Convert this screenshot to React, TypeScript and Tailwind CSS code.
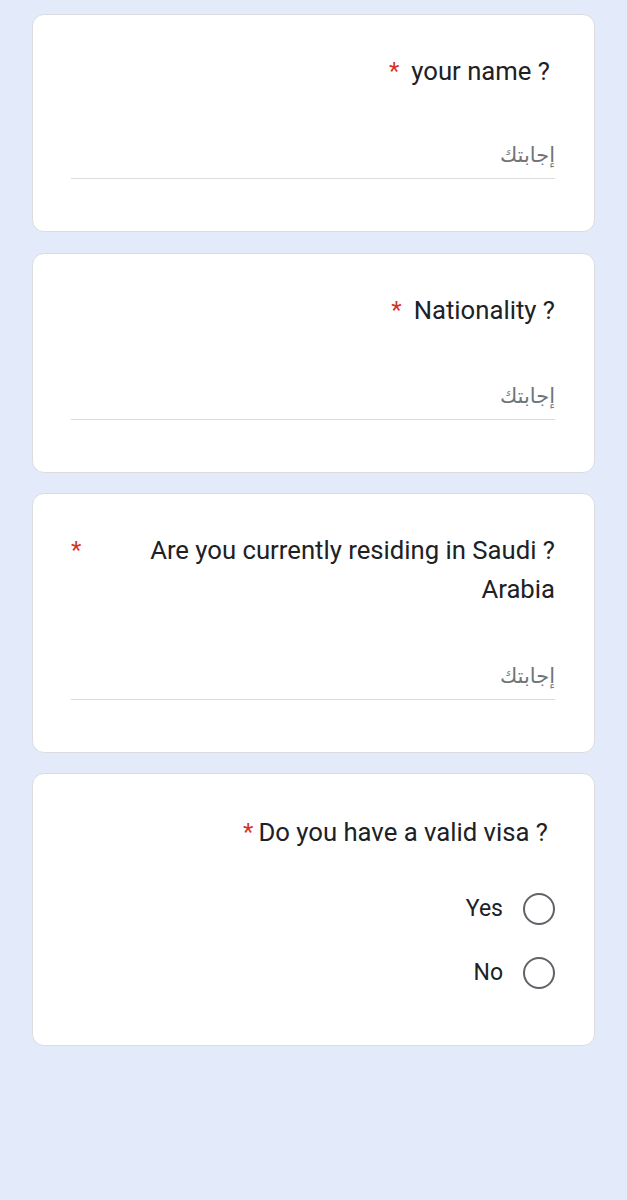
const font = { fontFamily: 'Roboto, "DejaVu Sans", "Liberation Sans", sans-serif' };

const Star = ({ className = "" }: { className?: string }) => (
    <span className={`text-[#d93025] text-[24px] leading-[39px] ${className}`}>*</span>
);

const AnswerInput = ({ mt }: { mt: string }) => (
    <div className={`${mt} h-[41px] border-b border-[#dadce0] flex justify-end items-start pt-[3px]`}>
        <span dir="rtl" className="text-[21px] leading-[28px] text-[#70757a]">إجابتك</span>
    </div>
);

const Card: React.FC<{ children: React.ReactNode; className?: string }> = ({ children, className = "" }) => (
    <div className={`bg-white border border-[#dadce0] rounded-[12px] pl-[38px] pr-[39px] pt-[37px] ${className}`}>
        {children}
    </div>
);

const Radio = ({ label }: { label: string }) => (
    <div className="h-[48px] flex items-center justify-end gap-[20px]">
        <span className="text-[23px] text-[#202124]">{label}</span>
        <span className="w-[32px] h-[32px] rounded-full border-[2.5px] border-[#5f6368]" />
    </div>
);

export default function App() {
    return (
        <div className="min-h-[1200px] bg-[#e3eafa] px-[32px] pt-[14px] pb-[40px] text-[#202124]" style={font}>
            <div className="flex flex-col gap-[20px]">
                <Card>
                    <div className="flex justify-end items-start pr-[5px]">
                        <Star className="mr-[12px]" />
                        <span className="text-[25.7px] leading-[39px]">your name ?</span>
                    </div>
                    <AnswerInput mt="mt-[47px]" />
                    <div className="h-[52px]" />
                </Card>

                <Card className="mt-[1px]">
                    <div className="flex justify-end items-start">
                        <Star className="mr-[12px]" />
                        <span className="text-[25.7px] leading-[39px]">Nationality ?</span>
                    </div>
                    <AnswerInput mt="mt-[49px]" />
                    <div className="h-[52px]" />
                </Card>

                <Card>
                    <div className="flex justify-between items-start">
                        <Star />
                        <div className="text-right text-[25.7px] leading-[39px]">
                            <div>Are you currently residing in Saudi ?</div>
                            <div>Arabia</div>
                        </div>
                    </div>
                    <AnswerInput mt="mt-[50px]" />
                    <div className="h-[52px]" />
                </Card>

                <Card className="pt-[39px]">
                    <div className="flex justify-end items-start pr-[7px]">
                        <Star className="mr-[5px]" />
                        <span className="text-[25.7px] leading-[39px]">Do you have a valid visa ?</span>
                    </div>
                    <div className="mt-[33px] flex flex-col gap-[16px]">
                        <Radio label="Yes" />
                        <Radio label="No" />
                    </div>
                    <div className="h-[48px]" />
                </Card>
            </div>
        </div>
    );
}
